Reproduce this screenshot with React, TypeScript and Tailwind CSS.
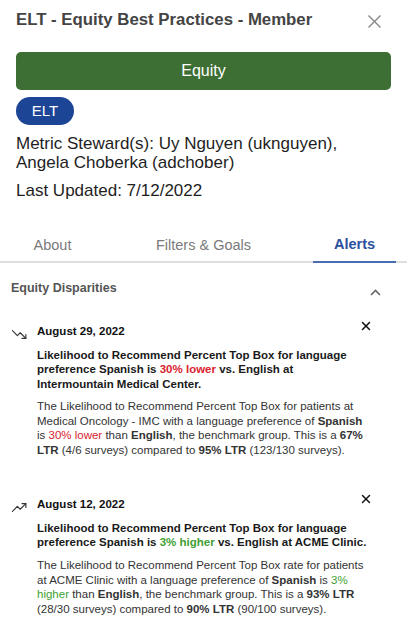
import React from 'react';

function TrendIcon({ up }: { up: boolean }) {
    return (
        <svg width="17" height="17" viewBox="0 0 24 24" fill="none" stroke="#333" strokeWidth="1.6" strokeLinecap="round" strokeLinejoin="round">
            {up ? (
                <>
                    <polyline points="2,17.5 9,10.5 13,14.5 21,6.5" />
                    <polyline points="15.5,6.5 21,6.5 21,12" />
                </>
            ) : (
                <>
                    <polyline points="2,6.5 9,13.5 13,9.5 21,17.5" />
                    <polyline points="21,12 21,17.5 15.5,17.5" />
                </>
            )}
        </svg>
    );
}

function SmallX() {
    return (
        <svg width="10" height="10" viewBox="0 0 10 10" stroke="#111" strokeWidth="1.5" strokeLinecap="round">
            <line x1="1.5" y1="1.5" x2="8.5" y2="8.5" />
            <line x1="8.5" y1="1.5" x2="1.5" y2="8.5" />
        </svg>
    );
}

const Red = ({ children }: { children: React.ReactNode }) => <span className="text-[#d9232e]">{children}</span>;
const Green = ({ children }: { children: React.ReactNode }) => <span className="text-[#3f9f33]">{children}</span>;

function Alert({ up, date, heading, body, className }: { up: boolean, date: string, heading: React.ReactNode, body: React.ReactNode, className?: string }) {
    return (
        <div className={`relative flex ${className || ''}`}>
            <div className="mt-[3.5px] w-[17px] h-[17px] shrink-0">
                <TrendIcon up={up} />
            </div>
            <div className="ml-[9px] w-[334px]">
                <div className="text-[11.5px] leading-[16px] font-bold text-[#111]">{date}</div>
                <div className="mt-[9px] text-[11.5px] leading-[14.5px] font-bold text-[#1a1a1a]">{heading}</div>
                <div className="mt-2 text-[11.5px] leading-[14.7px] text-[#333]">{body}</div>
            </div>
            <button className="absolute right-[25px] top-[-2px] w-[10px] h-[10px]">
                <SmallX />
            </button>
        </div>
    );
}

export default function App() {
    const tabs = ['About', 'Filters & Goals', 'Alerts'];
    return (
        <div className="w-[407px] h-[636px] overflow-hidden bg-white font-['Liberation_Sans',Arial,sans-serif]">
            <div className="px-4">
                <div className="flex items-center justify-between h-[40px]">
                    <h1 className="text-[16.8px] font-bold text-[#444]">ELT - Equity Best Practices - Member</h1>
                    <button className="mr-[10px] mt-[2px]">
                        <svg width="13" height="13" viewBox="0 0 13 13" stroke="#8a8a8a" strokeWidth="1.4">
                            <line x1="0.5" y1="0.5" x2="12.5" y2="12.5" />
                            <line x1="12.5" y1="0.5" x2="0.5" y2="12.5" />
                        </svg>
                    </button>
                </div>
                <div className="mt-[12px] h-[38px] rounded-[5px] bg-[#3d6f35] flex items-center justify-center text-white text-[16px]">
                    Equity
                </div>
                <div className="mt-[7px] h-[28px] w-[58px] rounded-full bg-[#1d4596] flex items-center justify-center text-white text-[15px]">
                    ELT
                </div>
                <p className="mt-[9px] text-[17px] leading-[19px] text-[#1e1e1e]">
                    Metric Steward(s): Uy Nguyen (uknguyen), Angela Choberka (adchober)
                </p>
                <p className="mt-[9px] text-[17px] leading-[19px] text-[#1e1e1e]">Last Updated: 7/12/2022</p>
            </div>

            <div className="mt-[26.5px] border-b-2 border-[#dedede] flex justify-between px-[11px]">
                {tabs.map((t) => (
                    <div
                        key={t}
                        className={`min-w-[83px] -mb-[2px] flex items-center justify-center text-[14.5px] ${t === 'Alerts' ? 'h-[36px] pt-[2px] font-bold text-[#2b4f9e] border-b-2 border-[#4a6cb0]' : 'h-[34px] pt-[4px] text-[#7a7a7a]'}`}
                    >
                        {t}
                    </div>
                ))}
            </div>

            <div className="px-[11px]">
                <div className="pt-[17px] flex justify-between">
                    <h2 className="text-[12.5px] leading-[16px] font-bold text-[#555]">Equity Disparities</h2>
                    <svg className="mr-[15px] mt-[9px]" width="11" height="7" viewBox="0 0 11 7" fill="none" stroke="#666" strokeWidth="1.6">
                        <polyline points="1,6 5.5,1.5 10,6" />
                    </svg>
                </div>

                <Alert
                    className="mt-[27px]"
                    up={false}
                    date="August 29, 2022"
                    heading={<>Likelihood to Recommend Percent Top Box for language preference Spanish is <Red>30% lower</Red> vs. English at Intermountain Medical Center.</>}
                    body={<>The Likelihood to Recommend Percent Top Box for patients at Medical Oncology - IMC with a language preference of <b>Spanish</b> is <Red>30% lower</Red> than <b>English</b>, the benchmark group. This is a <b>67% LTR</b> (4/6 surveys) compared to <b>95% LTR</b> (123/130 surveys).</>}
                />

                <Alert
                    className="mt-[38px]"
                    up={true}
                    date="August 12, 2022"
                    heading={<>Likelihood to Recommend Percent Top Box for language preference Spanish is <Green>3% higher</Green> vs. English at ACME Clinic.</>}
                    body={<>The Likelihood to Recommend Percent Top Box rate for patients at ACME Clinic with a language preference of <b>Spanish</b> is <Green>3% higher</Green> than <b>English</b>, the benchmark group. This is a <b>93% LTR</b> (28/30 surveys) compared to <b>90% LTR</b> (90/100 surveys).</>}
                />
            </div>
        </div>
    );
}
